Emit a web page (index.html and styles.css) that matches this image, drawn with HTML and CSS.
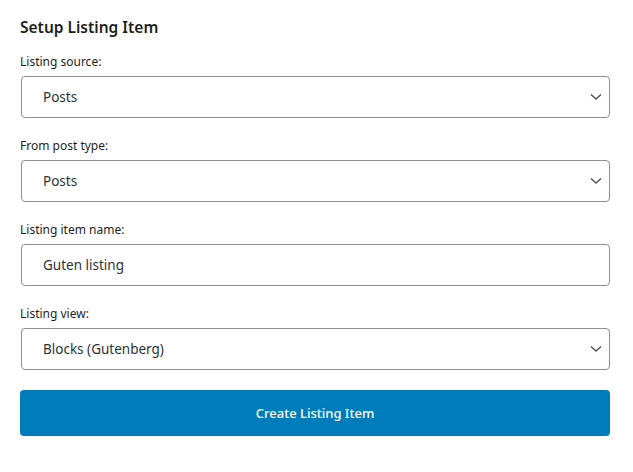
FILE: index.html
```html
<!DOCTYPE html>
<html>
<head>
<meta charset="utf-8">
<link rel="stylesheet" href="styles.css">
</head>
<body>
<div class="panel">
  <h2 class="title">Setup Listing Item</h2>
  <div class="field">
    <label class="label">Listing source:</label>
    <div class="control select"><span>Posts</span><svg class="chev" width="12" height="8" viewBox="0 0 12 8"><path d="M1 1.5l5 4.5 5-4.5" fill="none" stroke="#50575e" stroke-width="1.6"/></svg></div>
  </div>
  <div class="field">
    <label class="label">From post type:</label>
    <div class="control select"><span>Posts</span><svg class="chev" width="12" height="8" viewBox="0 0 12 8"><path d="M1 1.5l5 4.5 5-4.5" fill="none" stroke="#50575e" stroke-width="1.6"/></svg></div>
  </div>
  <div class="field">
    <label class="label">Listing item name:</label>
    <div class="control"><span>Guten listing</span></div>
  </div>
  <div class="field">
    <label class="label">Listing view:</label>
    <div class="control select"><span>Blocks (Gutenberg)</span><svg class="chev" width="12" height="8" viewBox="0 0 12 8"><path d="M1 1.5l5 4.5 5-4.5" fill="none" stroke="#50575e" stroke-width="1.6"/></svg></div>
  </div>
  <button class="btn">Create Listing Item</button>
</div>
</body>
</html>
```
FILE: styles.css
```css
* { box-sizing: border-box; }
html, body { margin: 0; background: #fff; }
body { font-family: "Segoe UI", "Noto Sans", "Open Sans", sans-serif; color: #1e1e1e; }
.panel { width: 633px; padding: 15px 23px 0 20px; display: flex; flex-direction: column; }
.title { margin: 0 0 14px; font-size: 15.5px; font-weight: 600; line-height: 24px; color: #1e1e1e; }
.field { display: flex; flex-direction: column; margin-bottom: 19px; }
.label { font-size: 12px; line-height: 18px; color: #1e1e1e; margin-bottom: 5px; }
.control { height: 42px; border: 1px solid #8c8f94; border-radius: 4px; padding: 0 0 0 21px; display: flex; align-items: center; justify-content: space-between; font-size: 13.5px; color: #2c3338; margin-left: 1px; }
.chev { margin-right: 7px; }
.btn { margin-top: 1px; height: 46px; flex: none; background: #007cba; color: #fff; border: 0; border-radius: 4px; font-family: inherit; font-size: 13px; font-weight: 500; }
```
